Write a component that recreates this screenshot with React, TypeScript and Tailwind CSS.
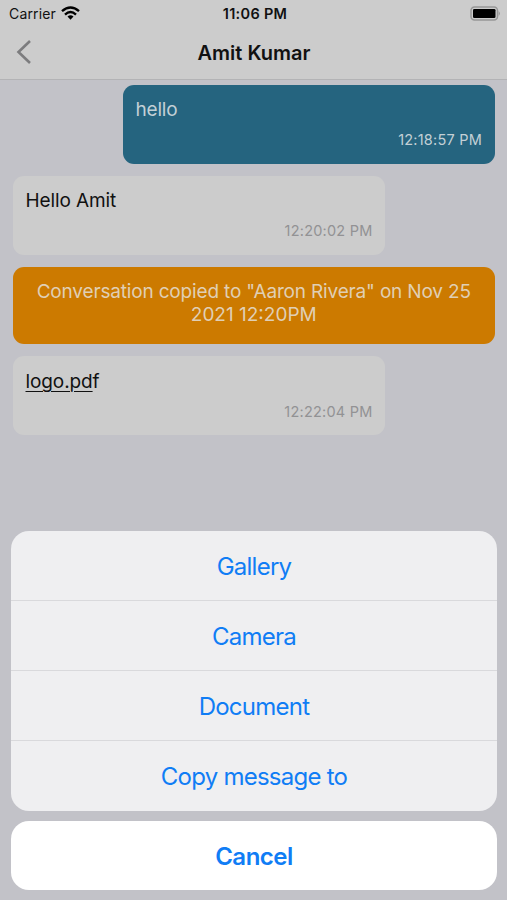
const msg = "rounded-[11px] px-[12.5px] flex flex-col";
const time = "mt-2 self-end text-[14.5px] leading-5 tracking-[0.22px]";
const actions = ["Gallery", "Camera", "Document", "Copy message to"];

export default function App() {
  return (
    <div className="relative flex h-[900px] w-[507px] flex-col overflow-hidden bg-[#c2c2c8] font-['Inter',sans-serif]">
      <header className="flex h-[80px] flex-col border-b border-[#b3b3b5] bg-[#cccccc]">
        <div className="grid h-[27px] grid-cols-3 items-center pr-[6px] pl-[9px] text-[14px] leading-[27px] text-[#111]">
          <div className="flex items-center gap-[5px]">
            <span className="tracking-[0.15px]">Carrier</span>
            <svg className="-mt-[2px]" width="19" height="14" viewBox="0 0 19 14" fill="none" stroke="black" strokeWidth="2.4">
              <path d="M1 5.2 Q9.5 -2.3 18 5.2" />
              <path d="M4 8.6 Q9.5 3.6 15 8.6" />
              <path d="M6.5 10.6 Q9.5 8 12.5 10.6 L9.5 13.7Z" fill="black" stroke="none" />
            </svg>
          </div>
          <span className="text-center text-[14.5px] font-semibold tracking-[0.3px]">11:06 PM</span>
          <svg className="-mt-[1px] justify-self-end" width="31" height="15" viewBox="0 0 31 15">
            <rect x="1" y="1" width="26.5" height="13" rx="3.5" fill="none" stroke="#969696" strokeWidth="1.5" />
            <rect x="3" y="3" width="22.5" height="9" rx="1.3" />
            <path d="M28.6 5q2.6 2.5 0 5z" fill="#969696" />
          </svg>
        </div>
        <div className="grid h-[50px] grid-cols-[60px_1fr_60px] items-center">
          <svg className="ml-4" width="16" height="24" viewBox="0 0 16 24" fill="none" stroke="#7c7c7e" strokeWidth="2.6">
            <path d="M14 1 2.5 12 14 23" />
          </svg>
          <h1 className="pt-px pl-px text-center text-[20px] font-semibold text-[#111]">Amit Kumar</h1>
        </div>
      </header>
      <main className="flex flex-col pt-[5px] pr-[12.5px] pl-[13px]">
        <div className={msg + " h-[78.5px] w-[371.5px] self-end bg-[#25647f] text-[#c3d0d6]"}>
          <p className="mt-[13px] text-[19px] leading-6 tracking-[-0.2px]">hello</p>
          <time className={time}>12:18:57 PM</time>
        </div>
        <div className={msg + " mt-[12.5px] h-[78.5px] w-[372px] bg-[#cccccc] text-[#111]"}>
          <p className="mt-[12.5px] text-[19px] leading-6 tracking-[-0.1px]">Hello Amit</p>
          <time className={time + " text-[#929294]"}>12:20:02 PM</time>
        </div>
        <div className="mt-[12px] h-[77.5px] rounded-[11px] bg-[#cc7a00] pt-[13px] text-center text-[19px] leading-[23px] tracking-[-0.17px] text-[#e0cfb5]">
          Conversation copied to "Aaron Rivera" on Nov 25<br />
          <span className="tracking-normal">2021 12:20PM</span>
        </div>
        <div className={msg + " mt-[12px] h-[79px] w-[372px] bg-[#cccccc] text-[#111]"}>
          <p className="mt-[13.5px] text-[19px] leading-6 tracking-[-0.1px]">
            <u className="decoration-1 underline-offset-[3px]">logo.pd</u>f
          </p>
          <time className={time + " text-[#929294]"}>12:22:04 PM</time>
        </div>
      </main>
      <section className="absolute bottom-[10px] left-[11px] flex w-[486px] flex-col gap-[10px] text-center text-[24px] text-[#107df5]">
        <div className="flex flex-col divide-y divide-[#d9d9dc] overflow-hidden rounded-[18px] bg-[#efeff1]">
          {actions.map((label) => (
            <button key={label} className="h-[70px] pt-[2px] tracking-[-0.75px]">{label}</button>
          ))}
        </div>
        <button className="h-[69px] rounded-[18px] bg-white pt-[3px] font-semibold tracking-[-0.5px]">Cancel</button>
      </section>
    </div>
  );
}
